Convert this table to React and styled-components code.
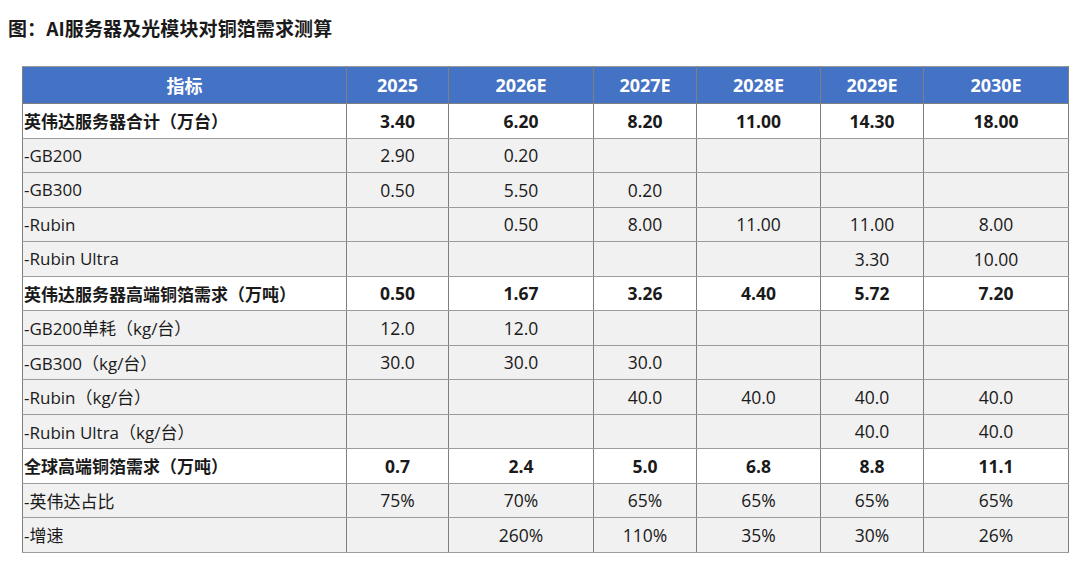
import React from "react";
import styled, { createGlobalStyle } from "styled-components";

const Global = createGlobalStyle`
  html, body { margin: 0; padding: 0; background: #fff; }
  body { font-family: "Open Sans", "Noto Sans CJK SC", sans-serif; color: #1a1a1a; }
`;

const Page = styled.div`
  width: 1080px;
  height: 562px;
  box-sizing: border-box;
  padding: 16px 0 0 0;
  overflow: hidden;
`;

const Title = styled.h1`
  margin: 0 0 0 8px;
  font-family: "Noto Sans CJK SC", sans-serif;
  font-size: 19px;
  line-height: 24px;
  font-weight: 700;
  color: #1a1a1a;
  letter-spacing: 0.1px;
`;

const Table = styled.table`
  margin: 26px 0 0 22px;
  width: 1046px;
  border-collapse: collapse;
  table-layout: fixed;
  font-family: "Open Sans", "Noto Sans CJK SC", sans-serif;
  font-size: 17px;
  color: #1a1a1a;
`;

const HeadCell = styled.th`
  background: #4472c4;
  color: #fff;
  font-weight: 700;
  font-size: 18px;
  height: 36px;
  padding: 0;
  text-align: center;
  border: 1.5px solid #7f7f7f;
  border-top-color: #9a9a9a;
`;

const Row = styled.tr`
  background: ${(p) => (p.$bold ? "#ffffff" : "#f1f1f1")};
  font-weight: ${(p) => (p.$bold ? 700 : 400)};
`;

const Cell = styled.td`
  height: 33.5px;
  padding: 0;
  text-align: ${(p) => (p.$label ? "left" : "center")};
  padding-left: ${(p) => (p.$label ? "1px" : "0")};
  border-left: 1.5px solid #7f7f7f;
  border-right: 1.5px solid #7f7f7f;
  border-bottom: 1.5px solid #9c9c9c;
  white-space: nowrap;
  font-size: ${(p) => (p.$label ? "17px" : "17.5px")};
  font-family: ${(p) =>
    p.$label ? '"Open Sans", "Noto Sans CJK SC", sans-serif' : '"Open Sans", sans-serif'};
`;

const widths = [324, 102, 145, 103, 124, 103, 145];
const headers = ["指标", "2025", "2026E", "2027E", "2028E", "2029E", "2030E"];

const rows = [
  { bold: true, cells: ["英伟达服务器合计（万台）", "3.40", "6.20", "8.20", "11.00", "14.30", "18.00"] },
  { cells: ["-GB200", "2.90", "0.20", "", "", "", ""] },
  { cells: ["-GB300", "0.50", "5.50", "0.20", "", "", ""] },
  { cells: ["-Rubin", "", "0.50", "8.00", "11.00", "11.00", "8.00"] },
  { cells: ["-Rubin Ultra", "", "", "", "", "3.30", "10.00"] },
  { bold: true, cells: ["英伟达服务器高端铜箔需求（万吨）", "0.50", "1.67", "3.26", "4.40", "5.72", "7.20"] },
  { cells: ["-GB200单耗（kg/台）", "12.0", "12.0", "", "", "", ""] },
  { cells: ["-GB300（kg/台）", "30.0", "30.0", "30.0", "", "", ""] },
  { cells: ["-Rubin（kg/台）", "", "", "40.0", "40.0", "40.0", "40.0"] },
  { cells: ["-Rubin Ultra（kg/台）", "", "", "", "", "40.0", "40.0"] },
  { bold: true, cells: ["全球高端铜箔需求（万吨）", "0.7", "2.4", "5.0", "6.8", "8.8", "11.1"] },
  { cells: ["-英伟达占比", "75%", "70%", "65%", "65%", "65%", "65%"] },
  { cells: ["-增速", "", "260%", "110%", "35%", "30%", "26%"] },
];

export default function App() {
  return (
    <Page>
      <Global />
      <Title>图：AI服务器及光模块对铜箔需求测算</Title>
      <Table>
        <colgroup>
          {widths.map((w, i) => (
            <col key={i} style={{ width: w }} />
          ))}
        </colgroup>
        <thead>
          <tr>
            {headers.map((h) => (
              <HeadCell key={h}>{h}</HeadCell>
            ))}
          </tr>
        </thead>
        <tbody>
          {rows.map((r, i) => (
            <Row key={i} $bold={r.bold}>
              {r.cells.map((c, j) => (
                <Cell key={j} $label={j === 0}>
                  {c}
                </Cell>
              ))}
            </Row>
          ))}
        </tbody>
      </Table>
    </Page>
  );
}
